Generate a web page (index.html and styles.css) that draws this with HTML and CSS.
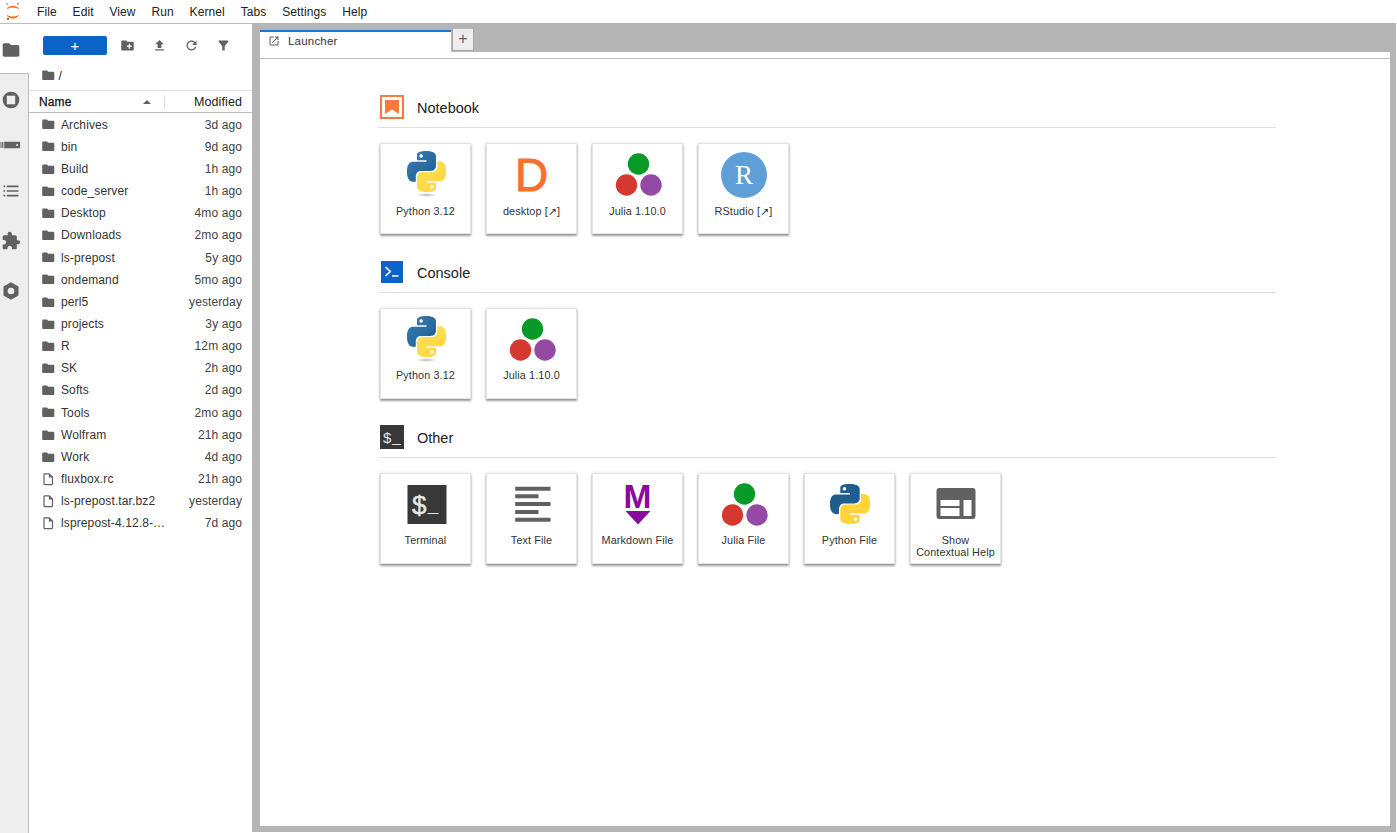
FILE: index.html
```html
<!DOCTYPE html>
<html lang="en">
<head>
<meta charset="utf-8">
<title>JupyterLab</title>
<link rel="stylesheet" href="styles.css">
</head>
<body>
<svg class="defs" width="0" height="0" aria-hidden="true">
  <defs>
    <linearGradient id="pyblue" x1="0" y1="0" x2="1" y2="1"><stop offset="0" stop-color="#3a7fb5"/><stop offset="1" stop-color="#1d5b90"/></linearGradient>
    <linearGradient id="pyyellow" x1="0" y1="0" x2="1" y2="1"><stop offset="0" stop-color="#ffe25a"/><stop offset="1" stop-color="#ffd43b"/></linearGradient>
    <radialGradient id="pyshadow"><stop offset="0" stop-color="#b8b8b8"/><stop offset="1" stop-color="#b8b8b8" stop-opacity="0"/></radialGradient>
    <symbol id="i-folder" viewBox="0 0 24 24"><path d="M10 4H4c-1.1 0-1.99.9-1.99 2L2 18c0 1.1.9 2 2 2h16c1.1 0 2-.9 2-2V8c0-1.1-.9-2-2-2h-8l-2-2z"/></symbol>
    <symbol id="i-file" viewBox="0 0 24 24"><path d="M14 2H6c-1.1 0-2 .9-2 2v16c0 1.1.9 2 2 2h12c1.1 0 2-.9 2-2V8l-6-6zm4 18H6V4h7v5h5v11z"/></symbol>
    <symbol id="i-pyb" viewBox="0 0 24 24"><path fill-rule="evenodd" d="M14.25.18l.9.2.73.26.59.3.45.32.34.34.25.34.16.33.1.3.04.26.02.2-.01.13V8.5l-.05.63-.13.55-.21.46-.26.38-.3.31-.33.25-.35.19-.35.14-.33.1-.3.07-.26.04-.21.02H8.77l-.69.05-.59.14-.5.22-.41.27-.33.32-.27.35-.2.36-.15.37-.1.35-.07.32-.04.27-.02.21v3.06H3.17l-.21-.03-.28-.07-.32-.12-.35-.18-.36-.26-.36-.36-.35-.46-.32-.59-.28-.73-.21-.88-.14-1.05-.05-1.23.06-1.22.16-1.04.24-.87.32-.71.36-.57.4-.44.42-.33.42-.24.4-.16.36-.1.32-.05.24-.01h.16l.06.01h8.16v-.83H6.18l-.01-2.75-.02-.37.05-.34.11-.31.17-.28.25-.26.31-.23.38-.2.44-.18.51-.15.58-.12.64-.1.71-.06.77-.04.84-.02 1.27.05zm-6.3 1.98l-.23.33-.08.41.08.41.23.34.33.22.41.09.41-.09.33-.22.23-.34.08-.41-.08-.41-.23-.33-.33-.22-.41-.09-.41.09z"/></symbol>
    <symbol id="i-pyy" viewBox="0 0 24 24"><path fill-rule="evenodd" d="M21.04 6.11l.28.06.32.12.35.18.36.27.36.35.35.47.32.59.28.73.21.88.14 1.04.05 1.23-.06 1.23-.16 1.04-.24.86-.32.71-.36.57-.4.45-.42.33-.42.24-.4.16-.36.09-.32.05-.24.02-.16-.01h-8.22v.82h5.84l.01 2.76.02.36-.05.34-.11.31-.17.29-.25.25-.31.24-.38.2-.44.17-.51.15-.58.13-.64.09-.71.07-.77.04-.84.01-1.27-.04-1.07-.14-.9-.2-.73-.25-.59-.3-.45-.33-.34-.34-.25-.34-.16-.33-.1-.3-.04-.25-.02-.2.01-.13v-5.34l.05-.64.13-.54.21-.46.26-.38.3-.32.33-.24.35-.2.35-.14.33-.1.3-.06.26-.04.21-.02.13-.01h5.84l.69-.05.59-.14.5-.21.41-.28.33-.32.27-.35.2-.36.15-.36.1-.35.07-.32.04-.28.02-.21V6.07h2.09l.14.01zm-6.47 14.25l-.23.33-.08.41.08.41.23.33.33.23.41.08.41-.08.33-.23.23-.33.08-.41-.08-.41-.23-.33-.33-.23-.41-.08-.41.08z"/></symbol>
    <symbol id="i-julia" viewBox="0 0 52 52">
      <circle cx="26.500" cy="15" r="10.700" fill="#079a27"/>
      <circle cx="14.500" cy="36" r="10.700" fill="#d5382f"/>
      <circle cx="39" cy="36" r="10.700" fill="#9449a5"/>
    </symbol>
    <symbol id="i-nbpy" viewBox="0 0 52 52">
      <ellipse cx="26.500" cy="46" rx="11" ry="2" fill="url(#pyshadow)"/>
      <svg x="7" y="2" width="39" height="41" viewBox="0 0 24 24" preserveAspectRatio="none">
        <use href="#i-pyb" width="24" height="24" fill="url(#pyblue)"/>
        <use href="#i-pyy" width="24" height="24" fill="url(#pyyellow)"/>
      </svg>
    </symbol>
  </defs>
</svg>

<header class="menubar">
  <svg class="logo" width="16" height="20" viewBox="0 0 16 20">
    <path d="M1.500 7.500C3 2.500 12.500 2.500 14.500 7.500 12 5 4 5 1.500 7.500z" fill="#f37726"/>
    <path d="M1.500 12.500C3 18 12.500 18 14.500 12.500 12 15 4 15 1.500 12.500z" fill="#f37726"/>
    <circle cx="13" cy="1.800" r="1" fill="#8a8a8a"/>
    <circle cx="2" cy="1.800" r=".9" fill="#8a8a8a"/>
    <circle cx="3" cy="16.800" r="1.100" fill="#616161"/>
  </svg>
  <nav class="menu">
    <span>File</span><span>Edit</span><span>View</span><span>Run</span><span>Kernel</span><span>Tabs</span><span>Settings</span><span>Help</span>
  </nav>
</header>

<div class="app">
  <aside class="sidebar">
    <div class="side-tab side-active"><svg class="side-icon" viewBox="0 0 24 24"><use href="#i-folder"/></svg></div>
    <div class="side-tab side-h52"><svg class="side-icon" viewBox="0 0 24 24"><path fill-rule="evenodd" d="M12 2a10 10 0 1 0 0 20 10 10 0 0 0 0-20zm-5 5h10v10H7z"/></svg></div>
    <div class="side-tab side-h38"><svg class="side-icon side-icon-wide" viewBox="0 0 24 24"><path fill-rule="evenodd" d="M0 8.500h1.200v7H0zM2 8.500h1.500v7H2zM4.500 8h19v8h-19zM20 10.800a1.200 1.200 0 1 0 0 2.400 1.200 1.200 0 0 0 0-2.400z"/></svg></div>
    <div class="side-tab side-h52 side-list"><svg class="side-icon" viewBox="0 0 24 24"><path d="M3 5.500h2v2H3zM7 5.500h14v2H7zM3 11h2v2H3zM7 11h14v2H7zM3 16.500h2v2H3zM7 16.500h14v2H7z"/></svg></div>
    <div class="side-tab"><svg class="side-icon" viewBox="0 0 24 24"><path d="M20.500 11H19V7c0-1.100-.9-2-2-2h-4V3.500C13 2.120 11.880 1 10.500 1S8 2.120 8 3.500V5H4c-1.100 0-1.990.9-1.990 2v3.800H3.500c1.490 0 2.700 1.210 2.700 2.700s-1.210 2.700-2.700 2.700H2V20c0 1.100.9 2 2 2h3.800v-1.500c0-1.490 1.210-2.700 2.700-2.700 1.490 0 2.700 1.210 2.700 2.700V22H17c1.100 0 2-.9 2-2v-4h1.500c1.380 0 2.500-1.120 2.500-2.500S21.880 11 20.500 11z"/></svg></div>
    <div class="side-tab"><svg class="side-icon" viewBox="0 0 24 24"><path fill-rule="evenodd" d="M12 1.500l9 5.200v10.600l-9 5.200-9-5.200V6.700zM12 8a4 4 0 1 0 0 8 4 4 0 0 0 0-8z"/></svg></div>
  </aside>

  <section class="browser">
    <div class="toolbar">
      <button class="new-btn" type="button">+</button>
      <div class="tools">
        <svg class="tool" viewBox="0 0 24 24"><path d="M20 6h-8l-2-2H4c-1.110 0-1.990.89-1.990 2L2 18c0 1.110.89 2 2 2h16c1.110 0 2-.89 2-2V8c0-1.110-.89-2-2-2zm-1 8h-3v3h-2v-3h-3v-2h3V9h2v3h3v2z"/></svg>
        <svg class="tool" viewBox="0 0 24 24"><path d="M9 16h6v-6h4l-7-7-7 7h4zm-4 2h14v2H5z"/></svg>
        <svg class="tool" viewBox="0 0 24 24"><path d="M17.650 6.350C16.200 4.900 14.210 4 12 4c-4.420 0-7.990 3.580-7.990 8s3.570 8 7.990 8c3.730 0 6.840-2.550 7.730-6h-2.080c-.82 2.330-3.040 4-5.650 4-3.310 0-6-2.690-6-6s2.690-6 6-6c1.660 0 3.140.69 4.220 1.780L13 11h7V4l-2.350 2.350z"/></svg>
        <svg class="tool" viewBox="0 0 24 24"><path d="M4.250 5.610C6.270 8.200 10 13 10 13v6c0 .55.45 1 1 1h2c.55 0 1-.45 1-1v-6s3.720-4.800 5.740-7.390A1 1 0 0 0 18.950 4H5.040a1 1 0 0 0-.79 1.610z"/></svg>
      </div>
    </div>
    <div class="crumbs"><svg class="row-icon" viewBox="0 0 24 24"><use href="#i-folder"/></svg><span>/</span></div>
    <div class="list-head">
      <div class="head-name"><span>Name</span><i class="caret"></i></div>
      <div class="head-mod">Modified</div>
    </div>
    <ul class="files">
      <li><svg class="row-icon" viewBox="0 0 24 24"><use href="#i-folder"/></svg><span class="fname">Archives</span><span class="fdate">3d ago</span></li>
      <li><svg class="row-icon" viewBox="0 0 24 24"><use href="#i-folder"/></svg><span class="fname">bin</span><span class="fdate">9d ago</span></li>
      <li><svg class="row-icon" viewBox="0 0 24 24"><use href="#i-folder"/></svg><span class="fname">Build</span><span class="fdate">1h ago</span></li>
      <li><svg class="row-icon" viewBox="0 0 24 24"><use href="#i-folder"/></svg><span class="fname">code_server</span><span class="fdate">1h ago</span></li>
      <li><svg class="row-icon" viewBox="0 0 24 24"><use href="#i-folder"/></svg><span class="fname">Desktop</span><span class="fdate">4mo ago</span></li>
      <li><svg class="row-icon" viewBox="0 0 24 24"><use href="#i-folder"/></svg><span class="fname">Downloads</span><span class="fdate">2mo ago</span></li>
      <li><svg class="row-icon" viewBox="0 0 24 24"><use href="#i-folder"/></svg><span class="fname">ls-prepost</span><span class="fdate">5y ago</span></li>
      <li><svg class="row-icon" viewBox="0 0 24 24"><use href="#i-folder"/></svg><span class="fname">ondemand</span><span class="fdate">5mo ago</span></li>
      <li><svg class="row-icon" viewBox="0 0 24 24"><use href="#i-folder"/></svg><span class="fname">perl5</span><span class="fdate">yesterday</span></li>
      <li><svg class="row-icon" viewBox="0 0 24 24"><use href="#i-folder"/></svg><span class="fname">projects</span><span class="fdate">3y ago</span></li>
      <li><svg class="row-icon" viewBox="0 0 24 24"><use href="#i-folder"/></svg><span class="fname">R</span><span class="fdate">12m ago</span></li>
      <li><svg class="row-icon" viewBox="0 0 24 24"><use href="#i-folder"/></svg><span class="fname">SK</span><span class="fdate">2h ago</span></li>
      <li><svg class="row-icon" viewBox="0 0 24 24"><use href="#i-folder"/></svg><span class="fname">Softs</span><span class="fdate">2d ago</span></li>
      <li><svg class="row-icon" viewBox="0 0 24 24"><use href="#i-folder"/></svg><span class="fname">Tools</span><span class="fdate">2mo ago</span></li>
      <li><svg class="row-icon" viewBox="0 0 24 24"><use href="#i-folder"/></svg><span class="fname">Wolfram</span><span class="fdate">21h ago</span></li>
      <li><svg class="row-icon" viewBox="0 0 24 24"><use href="#i-folder"/></svg><span class="fname">Work</span><span class="fdate">4d ago</span></li>
      <li><svg class="row-icon" viewBox="0 0 24 24"><use href="#i-file"/></svg><span class="fname">fluxbox.rc</span><span class="fdate">21h ago</span></li>
      <li><svg class="row-icon" viewBox="0 0 24 24"><use href="#i-file"/></svg><span class="fname">ls-prepost.tar.bz2</span><span class="fdate">yesterday</span></li>
      <li><svg class="row-icon" viewBox="0 0 24 24"><use href="#i-file"/></svg><span class="fname">lsprepost-4.12.8-…</span><span class="fdate">7d ago</span></li>
    </ul>
  </section>

  <main class="dock">
    <div class="tabbar">
      <div class="tab">
        <svg class="tab-icon" viewBox="0 0 24 24"><path d="M19 19H5V5h7V3H5c-1.110 0-2 .9-2 2v14c0 1.100.89 2 2 2h14c1.100 0 2-.9 2-2v-7h-2v7zM14 3v2h3.590l-9.830 9.830 1.410 1.410L19 6.410V10h2V3h-7z"/></svg>
        <span>Launcher</span>
      </div>
      <div class="tab-add">+</div>
    </div>
    <div class="tab-rule"></div>
    <div class="launcher">
      <section class="group">
        <header class="group-head">
          <svg class="group-icon" viewBox="0 0 24 24"><rect x="1" y="1" width="22" height="22" fill="none" stroke="#f7793b" stroke-width="2"/><path d="M5 5h14v14l-7-4.500L5 19z" fill="#f7793b"/></svg>
          <h2>Notebook</h2>
        </header>
        <div class="cards">
          <article class="card"><svg class="card-icon" viewBox="0 0 52 52"><use href="#i-nbpy"/></svg><p>Python 3.12</p></article>
          <article class="card"><div class="glyph-d">D</div><p>desktop [↗]</p></article>
          <article class="card"><svg class="card-icon" viewBox="0 0 52 52"><use href="#i-julia"/></svg><p>Julia 1.10.0</p></article>
          <article class="card"><svg class="card-icon" viewBox="0 0 52 52"><circle cx="26" cy="26" r="23" fill="#5f9fd8"/><text class="r-letter" x="26" y="35" text-anchor="middle">R</text></svg><p>RStudio [↗]</p></article>
        </div>
      </section>
      <section class="group">
        <header class="group-head">
          <svg class="group-icon" viewBox="0 0 24 24"><rect x="1" y="1" width="22" height="22" fill="#0d62c9"/><path d="M5.500 7l4.800 4.500-4.800 4.500" fill="none" stroke="#fff" stroke-width="1.700"/><path d="M12 15.200h6.500v1.500H12z" fill="#fff"/></svg>
          <h2>Console</h2>
        </header>
        <div class="cards">
          <article class="card"><svg class="card-icon" viewBox="0 0 52 52"><use href="#i-nbpy"/></svg><p>Python 3.12</p></article>
          <article class="card"><svg class="card-icon" viewBox="0 0 52 52"><use href="#i-julia"/></svg><p>Julia 1.10.0</p></article>
        </div>
      </section>
      <section class="group">
        <header class="group-head">
          <svg class="group-icon" viewBox="0 0 24 24"><rect width="24" height="24" fill="#383838"/><text class="term-small" x="3" y="17.500">$<tspan dy="-.5" dx="1">_</tspan></text></svg>
          <h2>Other</h2>
        </header>
        <div class="cards">
          <article class="card"><svg class="card-icon" viewBox="0 0 52 52"><rect x="7.500" y="6" width="39" height="39" fill="#383838"/><text class="term-big" x="12" y="34.500">$<tspan class="term-under" dx="1.500" dy="-1.500">_</tspan></text></svg><p>Terminal</p></article>
          <article class="card"><svg class="card-icon" viewBox="0 0 52 52"><path fill="#616161" d="M9.200 7.700h35.300v4H9.200zM9.200 15.300h23.300v4H9.200zM9.200 23h35.300v4H9.200zM9.200 31h23.300v4H9.200zM9.200 38.700h35.300v4H9.200z"/></svg><p>Text File</p></article>
          <article class="card"><div class="glyph-m">M</div><svg class="md-arrow" viewBox="0 0 26 14"><path fill="#8b0a9e" d="M.5 0h25L13 13.500z"/></svg><p>Markdown File</p></article>
          <article class="card"><svg class="card-icon" viewBox="0 0 52 52"><use href="#i-julia"/></svg><p>Julia File</p></article>
          <article class="card"><svg class="card-icon" viewBox="0 0 52 52"><svg x="6" y="5" width="40" height="40" viewBox="0 0 24 24"><use href="#i-pyb" width="24" height="24" fill="#1f5d8f"/><use href="#i-pyy" width="24" height="24" fill="#ffd43b"/></svg></svg><p>Python File</p></article>
          <article class="card"><svg class="card-icon" viewBox="0 0 52 52"><path fill-rule="evenodd" fill="#616161" d="M9.500 9h33a3 3 0 0 1 3 3v25a3 3 0 0 1-3 3h-33a3 3 0 0 1-3-3V12a3 3 0 0 1 3-3zM10.500 21v6h19v-6zM10.500 29v8h19v-8zM33.500 21v16h8V21z"/></svg><p>Show<br>Contextual Help</p></article>
        </div>
      </section>
    </div>
  </main>
</div>
</body>
</html>
```

FILE: styles.css
```css
* { box-sizing: border-box; }
html, body { margin: 0; padding: 0; height: 100%; overflow: hidden; }
body {
  font-family: "Liberation Sans", Arial, "DejaVu Sans", sans-serif;
  color: #212121;
  background: #fff;
  display: flex;
  flex-direction: column;
  height: 833px;
}
.defs { position: absolute; }

/* menu bar */
.menubar {
  height: 23px;
  flex: none;
  display: flex;
  align-items: center;
  background: #fff;
}
.logo { margin: 1px 0 0 5px; fill: #616161; flex: none; }
.menu { display: flex; margin-left: 16px; font-size: 12px; letter-spacing: .1px; }
.menu span { margin-right: 15.800px; }

/* app frame */
.app { flex: 1; display: flex; min-height: 0; }

/* sidebar */
.sidebar {
  width: 29px;
  flex: none;
  background: #eeeeee;
  border-right: 1px solid #bdbdbd;
  border-top: 1px solid #bdbdbd;
  display: flex;
  flex-direction: column;
}
.side-tab { height: 50px; flex: none; display: flex; align-items: center; justify-content: center; padding-right: 7px; }
.side-active { background: #fff; margin-right: -1px; position: relative; border-bottom: 1px solid #bdbdbd; padding: 3px 8px 0 0; height: 50px; }
.side-h52 { height: 52px; }
.side-h38 { height: 38px; }
.side-list { padding-top: 2px; }
.side-icon { width: 20px; height: 20px; fill: #616161; }
.side-icon-wide { width: 21px; }

/* file browser */
.browser {
  width: 223px;
  flex: none;
  background: #fff;
  display: flex;
  flex-direction: column;
  border-top: 1px solid #bdbdbd;
}
.toolbar { height: 42px; display: flex; align-items: center; padding: 0 0 0 14px; flex: none; }
.new-btn {
  width: 64px; height: 19px; border: 0; border-radius: 2px; padding: 0;
  background: #0a64c8; color: #fff; font: 400 15px/19px "Liberation Sans", sans-serif;
}
.tools { display: flex; margin-left: 12.500px; gap: 17.300px; }
.tool { width: 15px; height: 15px; fill: #616161; }
.crumbs { height: 24px; display: flex; align-items: center; padding: 0 0 5px 12px; font-size: 12px; gap: 3px; flex: none; }
.row-icon { width: 14.500px; height: 14.500px; flex: none; fill: #616161; }
.list-head {
  height: 23px; flex: none;
  display: flex;
  border-top: 1px solid #e0e0e0;
  border-bottom: 1px solid #bdbdbd;
  font-size: 12px;
  align-items: center;
  padding-top: 1px;
}
.head-name { width: 136px; padding-left: 10px; display: flex; align-items: center; justify-content: space-between; padding-right: 13px; border-right: 1px solid #e0e0e0; height: 14px; color: #111; font-weight: 400; letter-spacing: .1px; }
.head-name span { -webkit-text-stroke: .25px #111; }
.caret { width: 0; height: 0; border: 4px solid transparent; border-bottom: 4px solid #616161; border-top: 0; }
.head-mod { flex: 1; text-align: right; padding-right: 10px; font-size: 12.500px; letter-spacing: .1px; }
.files { list-style: none; margin: 0; padding: 0; }
.files li { height: 22.170px; display: flex; align-items: center; padding: 1px 10px 0 12px; font-size: 12px; }
.fname { margin-left: 5.500px; flex: 1; white-space: nowrap; overflow: hidden; letter-spacing: .12px; color: #333; }
.fdate { color: #424242; letter-spacing: .1px; }

/* dock */
.dock {
  flex: 1;
  min-width: 0;
  background: #b5b5b5;
  padding: 6px 6px 6px 8px;
  margin-right: 1px;
  margin-bottom: 1px;
  display: flex;
  flex-direction: column;
}
.tabbar { height: 23px; flex: none; display: flex; align-items: flex-start; }
.tab {
  width: 191px; height: 23px; margin-top: 1px;
  background: #fff; border-top: 2px solid #1976d2;
  display: flex; align-items: center;
  padding: 0 0 3px 8px;
  font-size: 11.500px; color: #333; letter-spacing: .2px;
}
.tab-icon { width: 12px; height: 12px; fill: #616161; margin-right: 8px; }
.tab-add {
  width: 22px; height: 22px; margin-left: 1px;
  background: #eee; border: 1px solid #a8a8a8; border-top: 0;
  color: #616161; font-size: 16px; line-height: 20px; text-align: center;
}
.tab-rule { height: 7px; flex: none; background: #fff; border-bottom: 1px solid #bdbdbd; }
.launcher { flex: 1; background: #fff; padding: 36px 0 0 118px; }
.group { width: 898px; margin-bottom: 25px; height: 140px; }
.group-head {
  height: 33px;
  display: flex;
  align-items: flex-start;
  padding-left: 2px;
  border-bottom: 1px solid #e0e0e0;
  margin-bottom: 15px;
}
.group-icon { width: 24px; height: 24px; flex: none; }
.group-head h2 { margin: 0 0 0 13px; font-size: 14.500px; line-height: 26px; font-weight: 400; color: #212121; }
.cards { display: flex; gap: 15px; padding-left: 2px; }
.card {
  width: 91px; height: 91px;
  border: 1px solid #e4e4e4;
  background: #fff;
  box-shadow: 0 2px 2px rgba(0, 0, 0, .38), 0 0 3px rgba(0, 0, 0, .12);
  padding-top: 5px;
  display: flex; flex-direction: column; align-items: center;
}
.card-icon { width: 52px; height: 52px; flex: none; }
.card p { margin: 3px 0 0; font-size: 10.800px; line-height: 12px; text-align: center; color: #333; letter-spacing: .12px; white-space: nowrap; }
.group:first-child .card p { margin-top: 4px; }
.glyph-d {
  width: 52px; height: 52px; flex: none;
  font: 400 46px/52px "Liberation Sans", sans-serif;
  color: #f7702e; text-align: center;
  -webkit-text-stroke: .9px #f7702e;
}
.glyph-m {
  width: 52px; height: 32px; flex: none;
  font: 700 33.500px/36px "Liberation Sans", sans-serif;
  color: #8b0a9e; text-align: center;
}
.md-arrow { width: 26px; height: 14px; flex: none; margin-bottom: 6px; }
.r-letter { font: 400 27px "Liberation Serif", serif; fill: #fff; }
.term-big { font: 400 26px "Liberation Sans", sans-serif; fill: #e6e6e6; stroke: #e6e6e6; stroke-width: .5px; }
.term-under { font: 700 18px "Liberation Sans", sans-serif; }
.term-small { font: 400 15px "Liberation Sans", sans-serif; fill: #e6e6e6; }
```
